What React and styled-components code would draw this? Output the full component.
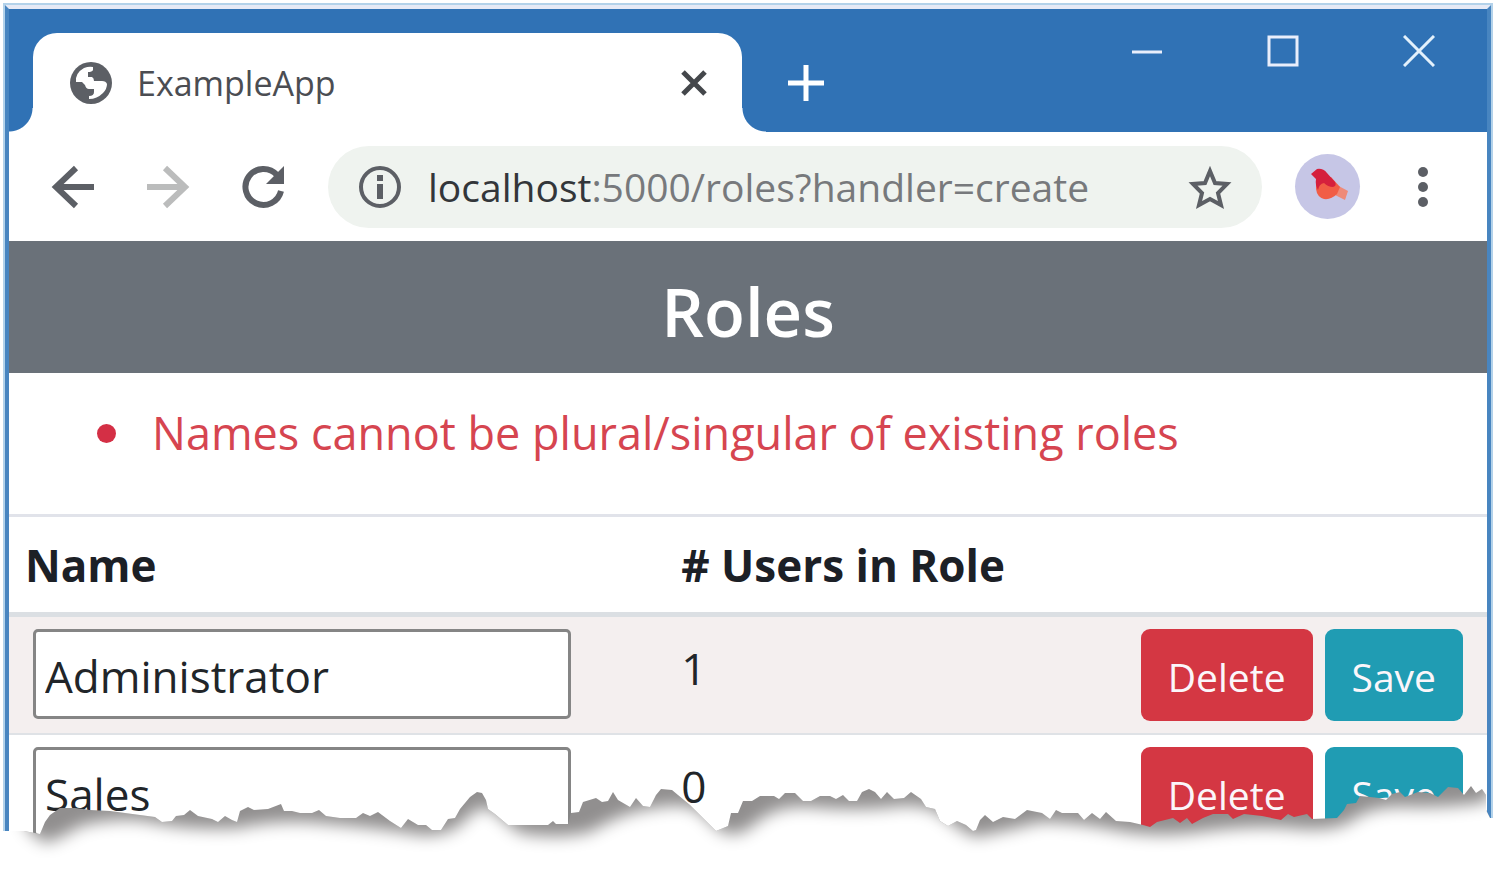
import React from 'react';
import styled, { createGlobalStyle } from 'styled-components';

const GlobalStyle = createGlobalStyle`
  * { box-sizing: border-box; }
  body {
    margin: 0;
    background: #fff;
    color: #212529;
    font-family: "Open Sans", "Noto Sans", sans-serif;
  }
  button { font-family: inherit; cursor: pointer; }
`;

const Page = styled.div`
  position: relative;
  padding: 5px 8px 22px 5px;
  overflow: hidden;
`;

const Frame = styled.div`
  border: 4px solid #4885c0;
  border-top-color: #e6eaf6;
  border-bottom: 0;
  box-shadow: 0 0 0 2px #b3d2ea;
  background: #fff;
`;

const TabStrip = styled.div`
  display: flex;
  height: 123px;
  padding: 24px 24px 0;
  background: #3072b5;
`;

const Tab = styled.div`
  position: relative;
  display: flex;
  align-items: center;
  flex: 0 1 709px;
  padding: 0 32px 0 36px;
  border-radius: 24px 24px 0 0;
  background: #fff;

  &::before, &::after {
    content: "";
    position: absolute;
    bottom: 0;
    width: 24px;
    height: 24px;
  }
  &::before {
    right: 100%;
    background: radial-gradient(circle at 0 0, transparent 23px, #fff 24px);
  }
  &::after {
    left: 100%;
    background: radial-gradient(circle at 100% 0, transparent 23px, #fff 24px);
  }
`;

const TabTitle = styled.span`
  flex: 1;
  margin-left: 24px;
  color: #4b4d52;
  font-size: 34px;
  line-height: 48px;
`;

const IconButton = styled.button`
  display: flex;
  align-items: center;
  justify-content: center;
  flex: none;
  width: ${(p) => p.$size || 48}px;
  height: ${(p) => p.$size || 48}px;
  padding: 0;
  border: 0;
  background: none;
  color: ${(p) => p.$color || '#5c5f65'};
`;

const NewTab = styled(IconButton)`
  align-self: center;
  margin-left: 40px;
`;

const WindowControls = styled.div`
  display: flex;
  gap: 88px;
  margin: -6px 20px 0 auto;
`;

const Toolbar = styled.div`
  display: flex;
  align-items: center;
  height: 109px;
  padding: 0 52px 0 40px;
`;

const NavButtons = styled.div`
  display: flex;
  gap: 47px;
  margin-right: 41px;
`;

const AddressBar = styled.div`
  display: flex;
  align-items: center;
  flex: 1;
  min-width: 0;
  height: 82px;
  padding: 0 28px;
  border-radius: 41px;
  background: #eff3ef;
`;

const Address = styled.div`
  flex: 1;
  margin-left: 24px;
  color: #77797c;
  font-size: 39px;
  line-height: 56px;
  white-space: nowrap;

  b { color: #33363a; font-weight: 400; }
`;

const Avatar = styled(IconButton)`
  margin: 0 51px 0 33px;
  border-radius: 50%;
  background: #c6c6e6;
`;

const Banner = styled.h1`
  margin: 0;
  padding: 30px 0 22px;
  background: #6a7179;
  color: #fff;
  font-size: 67px;
  font-weight: 600;
  line-height: 80px;
  text-align: center;
`;

const Errors = styled.ul`
  margin: 0;
  padding: 28px 16px 49px 88px;
  color: #d64550;
  font-size: 45px;
  line-height: 64px;
  list-style: none;

  li {
    display: flex;
    align-items: center;
    gap: 36px;
  }
  li::before {
    content: "";
    width: 19px;
    height: 19px;
    border-radius: 50%;
    background: #d42f45;
  }
`;

const RolesTable = styled.table`
  width: 100%;
  table-layout: fixed;
  border-spacing: 0;
`;

const HeadCell = styled.th`
  width: ${(p) => p.$width || 'auto'};
  padding: 18px 16px 16px;
  border-top: 3px solid #e1e3ea;
  border-bottom: 5px solid #dbdfe3;
  color: #1c2026;
  font-size: 44px;
  font-weight: 700;
  line-height: 61px;
  text-align: left;
`;

const Row = styled.tr`
  background: ${(p) => (p.$striped ? '#f4efef' : '#fff')};
`;

const Cell = styled.td`
  height: 118px;
  padding: 12px ${(p) => (p.$inset ? 24 : 16)}px;
  border-bottom: 2px solid #dfe2e6;
  font-size: 44px;
  line-height: 78px;
  vertical-align: top;
`;

const NameInput = styled.input`
  display: block;
  width: 100%;
  max-width: 538px;
  height: 90px;
  padding: 4px 9px 0;
  border: 3px solid #858585;
  border-radius: 5px;
  background: #fff;
  color: #212529;
  font: inherit;
`;

const Actions = styled.div`
  display: flex;
  justify-content: flex-end;
  gap: 12px;
`;

const ActionButton = styled.button`
  height: 92px;
  padding: 4px 27px 0;
  border: 0;
  border-radius: 9px;
  background: ${(p) => (p.$danger ? '#d43743' : '#209cb3')};
  color: #fbf6fa;
  font-size: 39px;
  line-height: 56px;
`;

const TornEdge = styled.svg`
  position: absolute;
  left: 0;
  bottom: 0;
  width: 100%;
  height: 115px;
  pointer-events: none;
`;

function Globe() {
  return (
    <svg width="44" height="44" viewBox="0 0 44 44" aria-hidden="true">
      <circle cx="22" cy="22" r="21" fill="#5c5f65" />
      <path
        fill="#fff"
        d="M15 7q5-2 9-1v3q-1 2-5 2v5h4q2 1 2 4h8q4 0 5 3 0 5-4 9-6 6-14 6v-3q5 0 5-4v-3h-5q-3 0-4-4l-3-3H7q-1-9 8-14z"
      />
    </svg>
  );
}

function Tear() {
  const edge =
    '24,71 40,74 45,62 50,55 60,48 75,48 90,50 110,51 125,53 140,55 155,57 162,62 172,61 176,56 184,55 190,50 198,56 212,59 218,62 225,56 232,60 237,62 240,51 248,47 254,50 268,49 281,44 284,51 292,51 300,53 312,53 319,50 326,56 340,58 356,58 363,53 370,56 378,52 390,61 401,68 408,59 418,65 426,65 432,70 441,70 448,59 455,58 460,49 470,37 477,32 482,33 486,40 488,49 495,54 508,65 548,65 553,61 556,64 568,64 571,53 579,52 583,42 596,38 602,42 608,41 613,32 618,40 630,47 636,38 643,46 650,47 656,35 661,29 672,30 690,45 716,71 728,66 731,53 738,53 743,41 752,41 760,36 774,36 779,39 785,33 795,33 803,41 811,41 820,36 830,36 836,39 843,35 849,41 857,41 862,32 869,29 875,32 881,39 887,32 894,39 904,38 911,32 921,39 926,47 935,49 940,61 948,66 957,61 966,65 973,71 976,70 980,60 985,55 993,62 1003,57 1015,59 1027,50 1042,53 1050,59 1056,50 1062,53 1078,53 1084,60 1092,53 1100,59 1106,52 1116,61 1130,62 1143,65 1150,67 1157,62 1173,58 1180,63 1187,58 1192,64 1203,58 1213,54 1228,54 1233,59 1244,54 1262,56 1281,60 1288,54 1294,57 1307,54 1312,59 1337,58 1344,50 1347,44 1356,43 1360,36 1370,37 1379,38 1386,40 1392,34 1400,32 1405,37 1418,32 1430,33 1438,37 1448,27 1458,28 1464,35 1471,26 1476,33 1482,29 1486,35';
  return (
    <TornEdge viewBox="0 0 1499 115" preserveAspectRatio="none" aria-hidden="true">
      <defs>
        <clipPath id="tear">
          <polygon points={`0,71 ${edge} 1486,50 1490,58 1499,58 1499,115 0,115`} />
        </clipPath>
        <filter id="soft" x="-5%" y="-50%" width="110%" height="200%" colorInterpolationFilters="sRGB">
          <feGaussianBlur stdDeviation="8" />
        </filter>
      </defs>
      <g clipPath="url(#tear)">
        <rect width="1499" height="115" fill="#918f8f" />
        <path
          fill="#fff"
          filter="url(#soft)"
          d="M-60 20H12L28 70L45 83Q62 78 80 66Q120 56 150 62Q190 71 240 68Q280 58 330 64Q380 68 420 75Q450 77 465 60Q480 43 492 50Q505 62 520 73Q555 80 590 72Q625 51 655 48Q680 42 697 50L722 72Q738 78 752 66Q775 44 810 47Q860 52 900 46Q930 44 945 58Q960 70 975 77Q1010 70 1040 62Q1080 62 1120 71Q1160 78 1200 72Q1250 65 1290 68Q1330 73 1350 62Q1370 45 1410 47Q1450 48 1487 42L1494 20H1560V190H-60z"
        />
      </g>
    </TornEdge>
  );
}

const roles = [
  { name: 'Administrator', users: 1 },
  { name: 'Sales', users: 0 },
];

export default function App() {
  return (
    <Page>
      <GlobalStyle />
      <Frame>
        <TabStrip>
          <Tab>
            <Globe />
            <TabTitle>ExampleApp</TabTitle>
            <IconButton $size={32} $color="#44474b" aria-label="Close tab">
              <svg width="26" height="26" viewBox="0 0 26 26" stroke="currentColor" strokeWidth="5">
                <path d="M2 2l22 22M24 2L2 24" />
              </svg>
            </IconButton>
          </Tab>
          <NewTab $color="#fff" aria-label="New tab">
            <svg width="36" height="36" viewBox="0 0 36 36" stroke="currentColor" strokeWidth="5">
              <path d="M18 0v36M0 18h36" />
            </svg>
          </NewTab>
          <WindowControls>
            <IconButton $color="#e9eefb" aria-label="Minimize">
              <svg width="32" height="32" viewBox="0 0 32 32" stroke="currentColor" strokeWidth="3">
                <path d="M1 17h30" />
              </svg>
            </IconButton>
            <IconButton $color="#e9eefb" aria-label="Maximize">
              <svg width="32" height="32" viewBox="0 0 32 32" fill="none" stroke="currentColor" strokeWidth="3">
                <rect x="2" y="2" width="28" height="28" />
              </svg>
            </IconButton>
            <IconButton $color="#e3f1fc" aria-label="Close">
              <svg width="32" height="32" viewBox="0 0 32 32" stroke="currentColor" strokeWidth="3">
                <path d="M1 1l30 30M31 1L1 31" />
              </svg>
            </IconButton>
          </WindowControls>
        </TabStrip>

        <Toolbar>
          <NavButtons>
            <IconButton aria-label="Back">
              <svg width="44" height="44" viewBox="0 0 44 44" fill="none" stroke="currentColor" strokeWidth="6">
                <path d="M43 22H5M25 3L5 22l20 19" />
              </svg>
            </IconButton>
            <IconButton $color="#bbbcbc" aria-label="Forward">
              <svg width="44" height="44" viewBox="0 0 44 44" fill="none" stroke="currentColor" strokeWidth="6">
                <path d="M1 22h38M19 3l20 19-20 19" />
              </svg>
            </IconButton>
            <IconButton aria-label="Reload">
              <svg width="44" height="44" viewBox="0 0 44 44" fill="none" stroke="currentColor" strokeWidth="6">
                <path d="M40 26A18 18 0 1 1 36 10" />
                <path d="M43 1v18H25z" fill="currentColor" stroke="none" />
              </svg>
            </IconButton>
          </NavButtons>
          <AddressBar>
            <IconButton aria-label="Site information">
              <svg width="44" height="44" viewBox="0 0 44 44" fill="none" stroke="currentColor" strokeWidth="4">
                <circle cx="22" cy="22" r="19" />
                <path d="M22 19v15M22 10v6" strokeWidth="6" />
              </svg>
            </IconButton>
            <Address><b>localhost</b>:5000/roles?handler=create</Address>
            <IconButton aria-label="Bookmark this page">
              <svg width="44" height="44" viewBox="0 0 44 44" fill="none" stroke="currentColor" strokeWidth="4">
                <path d="M22 6l5 12 12 1-9 9 3 12-11-6-11 6 3-12-9-9 12-1z" />
              </svg>
            </IconButton>
          </AddressBar>
          <Avatar $size={65} aria-label="Profile">
            <svg width="65" height="65" viewBox="0 0 65 65">
              <path fill="#ef8a78" d="M40 30l13 7-3 9-12-6z" />
              <path fill="#f15d46" d="M21 27L36 23 45 33 42 40Q36 46 29 45 22 43 21 35z" />
              <path fill="#d5203d" d="M16 20l6-5q6-1 10 4l8 9q2 4-2 5-5 0-9-4-5 1-6 7-3-5-2-11z" />
            </svg>
          </Avatar>
          <IconButton $size={24} aria-label="Menu">
            <svg width="12" height="40" viewBox="0 0 12 40" fill="currentColor">
              <circle cx="6" cy="5" r="5" />
              <circle cx="6" cy="20" r="5" />
              <circle cx="6" cy="35" r="5" />
            </svg>
          </IconButton>
        </Toolbar>

        <Banner>Roles</Banner>
        <Errors>
          <li>Names cannot be plural/singular of existing roles</li>
        </Errors>

        <RolesTable>
          <thead>
            <tr>
              <HeadCell $width="44.4%">Name</HeadCell>
              <HeadCell># Users in Role</HeadCell>
              <HeadCell $width="26%" aria-label="Actions" />
            </tr>
          </thead>
          <tbody>
            {roles.map((role, i) => (
              <Row key={role.name} $striped={i % 2 === 0}>
                <Cell $inset>
                  <NameInput aria-label="Role name" defaultValue={role.name} />
                </Cell>
                <Cell>{role.users}</Cell>
                <Cell $inset>
                  <Actions>
                    <ActionButton $danger>Delete</ActionButton>
                    <ActionButton>Save</ActionButton>
                  </Actions>
                </Cell>
              </Row>
            ))}
          </tbody>
        </RolesTable>
      </Frame>
      <Tear />
    </Page>
  );
}
